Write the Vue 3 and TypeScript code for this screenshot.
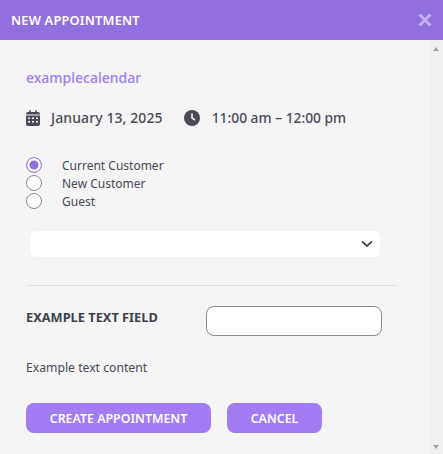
<script setup lang="ts">
import { ref } from 'vue'
const options = ['Current Customer', 'New Customer', 'Guest']
const selected = ref('Current Customer')
</script>

<template>
  <div class="dialog">
    <header class="head">
      <span class="title">NEW APPOINTMENT</span>
      <svg class="close" width="14" height="14" viewBox="0 0 14 14"><path d="M1.500 1.500 12.500 12.500M12.500 1.500 1.500 12.500" stroke="#c3aeee" stroke-width="3" fill="none"/></svg>
    </header>
    <div class="main">
      <div class="content">
        <div class="calendar">examplecalendar</div>
        <div class="when">
          <svg class="cal-ic" width="14" height="16" viewBox="0 0 448 512"><path fill="#4a4a55" d="M152 64h144V24c0-13 11-24 24-24s24 11 24 24v40h40c35 0 64 29 64 64v16H0v-16c0-35 29-64 64-64h40V24c0-13 11-24 24-24s24 11 24 24zM0 176h448v272c0 35-29 64-64 64H64c-35 0-64-29-64-64zm64 64v48h64v-48zm128 0v48h64v-48zm128 0v48h64v-48zM64 352v48h64v-48zm128 0v48h64v-48zm128 0v48h64v-48z" fill-rule="evenodd"/></svg>
          <span class="date">January 13, 2025</span>
          <svg class="clock-ic" width="16" height="16" viewBox="0 0 16 16"><circle cx="8" cy="8" r="8" fill="#4a4a55"/><path d="M8 3.500V8l3 2" stroke="#f5f5f5" stroke-width="1.600" fill="none"/></svg>
          <span class="time">11:00 am – 12:00 pm</span>
        </div>
        <div class="radios">
          <label v-for="o in options" :key="o" class="radio" @click="selected = o">
            <span class="dot" :class="{ on: selected === o }"></span>
            <span>{{ o }}</span>
          </label>
        </div>
        <div class="select">
          <svg width="12" height="8" viewBox="0 0 12 8"><path d="M1 1.500 6 6l5-4.500" stroke="#4a4a55" stroke-width="1.700" fill="none"/></svg>
        </div>
        <hr class="rule" />
        <div class="field">
          <span class="label">EXAMPLE TEXT FIELD</span>
          <input class="input" type="text" />
        </div>
        <p class="text">Example text content</p>
        <div class="actions">
          <button class="btn create">CREATE APPOINTMENT</button>
          <button class="btn cancel">CANCEL</button>
        </div>
      </div>
      <div class="scroll">
        <span class="up"></span>
        <span class="down"></span>
      </div>
    </div>
  </div>
</template>

<style>
html, body { margin: 0; background: #f5f5f5; }
</style>

<style scoped>
.dialog { width: 443px; height: 454px; display: flex; flex-direction: column; overflow: hidden; font-family: "Noto Sans", "Open Sans", sans-serif; color: #4a4a55; background: #f5f5f5; }
.head { height: 40px; flex: none; background: #926fdf; display: flex; align-items: center; justify-content: space-between; padding: 0 11px; box-sizing: border-box; }
.title { color: #fff; font-size: 12.800px; font-weight: 600; letter-spacing: .2px; }
.main { flex: 1; display: flex; min-height: 0; }
.content { flex: 1; padding: 28px 0 0 26px; box-sizing: border-box; min-width: 0; }
.scroll { width: 14px; flex: none; background: #f0f0f0; display: flex; flex-direction: column; justify-content: space-between; align-items: center; padding: 7px 0 5px; box-sizing: border-box; }
.up { width: 0; height: 0; border: 3.500px solid transparent; border-top: 0; border-bottom: 4px solid #a3a3a3; }
.down { width: 0; height: 0; border: 3.500px solid transparent; border-bottom: 0; border-top: 4px solid #a3a3a3; }
.calendar { color: #a27cf2; font-size: 14px; font-weight: 500; line-height: 20px; }
.when { display: flex; align-items: center; margin-top: 20px; font-size: 14px; font-weight: 500; line-height: 20px; height: 20px; }
.date { margin-left: 11px; margin-right: 21px; letter-spacing: .1px; }
.clock-ic { margin-right: 12px; }
.time { font-size: 13.800px; }
.radios { margin-top: 28px; display: flex; flex-direction: column; font-size: 12px; }
.radio { display: flex; align-items: center; height: 18px; gap: 20px; }
.dot { width: 16px; height: 16px; box-sizing: border-box; border-radius: 50%; border: 1px solid #8a8a8a; background: #fff; position: relative; }
.dot.on { border-color: #a27cf2; box-shadow: inset 0 0 0 2.500px #fff; background: #926fdf; }
.select { width: 350px; height: 26px; margin: 21px 0 0 4px; background: #fff; border-radius: 6px; display: flex; align-items: center; justify-content: flex-end; padding-right: 7px; box-sizing: border-box; box-shadow: 0 0 2px #ececec; }
.rule { width: 372px; margin: 28px 0 0; border: 0; border-top: 1px solid #e0e0e0; }
.field { display: flex; align-items: flex-start; margin-top: 20px; }
.label { width: 180px; font-size: 12.800px; font-weight: 700; color: #3f3f4a; line-height: 22px; }
.input { width: 176px; height: 30px; box-sizing: border-box; border: 1px solid #8a8a8a; border-radius: 8px; background: #fff; padding: 0 8px; outline: none; }
.text { margin: 23px 0 0; font-size: 12.200px; line-height: 18px; }
.actions { display: flex; gap: 16px; margin-top: 26px; }
.btn { height: 30px; border: 0; border-radius: 8px; background: #a27cf2; color: #fff; font: 600 12.400px "Noto Sans", "Open Sans", sans-serif; padding: 0; }
.create { width: 185px; }
.cancel { width: 95px; }
</style>
